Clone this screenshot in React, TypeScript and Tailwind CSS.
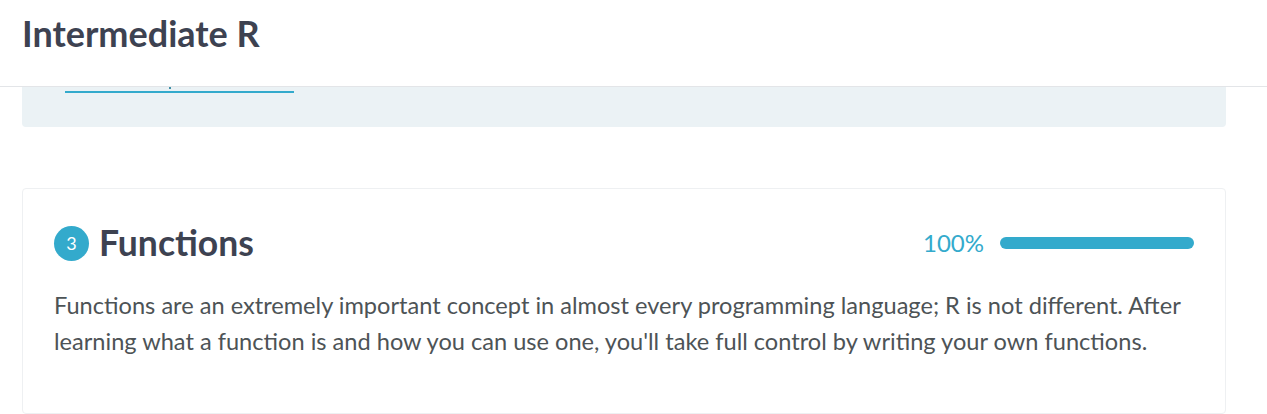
export default function App() {
  return (
    <div className="min-h-screen w-full bg-white font-['Lato',sans-serif]">
      <header className="h-[87px] border-b border-[#e3e5e8] px-[22px] pt-[11px]">
        <h1 className="text-[36px] font-bold leading-[44px] text-[#3d4251]">Intermediate R</h1>
      </header>

      <div className="ml-[22px] h-[40px] w-[1204px] rounded-b-[4px] bg-[#ebf2f5] pl-[43px] pt-[4px]">
        <div className="relative w-[229px] border-b-2 border-[#33aacc]">
          <span className="absolute left-[104px] top-[-4px] h-[2px] w-[2px] bg-[#3f8fa6]" />
        </div>
      </div>

      <section className="ml-[22px] mt-[61px] h-[226px] w-[1204px] rounded-[4px] border border-[#eef0f2] px-[31px] pt-[32px]">
        <div className="flex items-center justify-between">
          <div className="flex items-center gap-[10px]">
            <span className="flex h-[35px] w-[35px] items-center justify-center rounded-full bg-[#33aacc] text-[18px] text-white">
              3
            </span>
            <h2 className="text-[35.5px] font-bold leading-[44px] text-[#3d4251]">Functions</h2>
          </div>
          <div className="flex items-center gap-[16px]">
            <span className="text-[24px] text-[#33aacc]">100%</span>
            <div className="h-[12px] w-[194px] rounded-full bg-[#33aacc]" />
          </div>
        </div>
        <p className="mt-[22px] text-[23.6px] leading-[36px] text-[#4d5356]">
          <span className="block whitespace-nowrap">
            Functions are an extremely important concept in almost every programming language; R is not different. After
          </span>
          <span className="block whitespace-nowrap">
            learning what a function is and how you can use one, you'll take full control by writing your own functions.
          </span>
        </p>
      </section>
    </div>
  );
}
